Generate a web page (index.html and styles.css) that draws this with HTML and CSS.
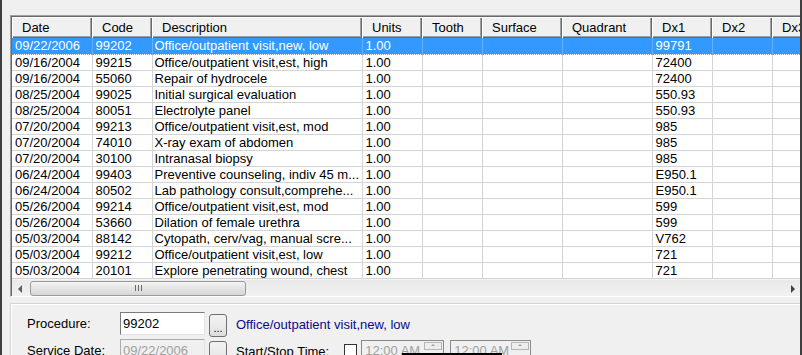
FILE: index.html
```html
<!DOCTYPE html>
<html lang="en">
<head>
<meta charset="UTF-8">
<title>Procedures</title>
<link rel="stylesheet" href="styles.css">
</head>
<body>
<div class="window">
  <div class="list">
    <div class="list-inner">
      <table class="grid">
        <colgroup>
          <col style="width:80px"><col style="width:60px"><col style="width:210px"><col style="width:60px"><col style="width:60px"><col style="width:80px"><col style="width:90px"><col style="width:60px"><col style="width:60px"><col style="width:60px">
        </colgroup>
        <thead>
          <tr><th>Date</th><th>Code</th><th>Description</th><th>Units</th><th>Tooth</th><th>Surface</th><th>Quadrant</th><th>Dx1</th><th>Dx2</th><th>Dx3</th></tr>
        </thead>
        <tbody id="rows"></tbody>
      </table>
      <div class="hscroll">
        <div class="arrow left"></div>
        <div class="track">
          <div class="thumb"><span class="grip"></span></div>
        </div>
        <div class="arrow right"></div>
      </div>
    </div>
  </div>

  <div class="details">
    <div class="field-row">
      <label class="field-label">Procedure:</label>
      <div class="textbox">99202</div>
      <button class="dots">...</button>
      <span class="desc-link">Office/outpatient visit,new, low</span>
    </div>
    <div class="field-row">
      <label class="field-label">Service Date:</label>
      <div class="textbox disabled">09/22/2006</div>
      <button class="dots">...</button>
      <span class="time-label">Start/Stop Time:</span>
      <span class="check"></span>
      <div class="timebox">12:00 AM<span class="spin"></span></div>
      <div class="timebox">12:00 AM<span class="spin"></span></div>
    </div>
  </div>
  <div class="drop-edge"></div>
</div>

<script>
  const rows = [
    ['09/22/2006', '99202', 'Office/outpatient visit,new, low', '99791'],
    ['09/16/2004', '99215', 'Office/outpatient visit,est, high', '72400'],
    ['09/16/2004', '55060', 'Repair of hydrocele', '72400'],
    ['08/25/2004', '99025', 'Initial surgical evaluation', '550.93'],
    ['08/25/2004', '80051', 'Electrolyte panel', '550.93'],
    ['07/20/2004', '99213', 'Office/outpatient visit,est, mod', '985'],
    ['07/20/2004', '74010', 'X-ray exam of abdomen', '985'],
    ['07/20/2004', '30100', 'Intranasal biopsy', '985'],
    ['06/24/2004', '99403', 'Preventive counseling, indiv 45 m...', 'E950.1'],
    ['06/24/2004', '80502', 'Lab pathology consult,comprehe...', 'E950.1'],
    ['05/26/2004', '99214', 'Office/outpatient visit,est, mod', '599'],
    ['05/26/2004', '53660', 'Dilation of female urethra', '599'],
    ['05/03/2004', '88142', 'Cytopath, cerv/vag, manual scre...', 'V762'],
    ['05/03/2004', '99212', 'Office/outpatient visit,est, low', '721'],
    ['05/03/2004', '20101', 'Explore penetrating wound, chest', '721']
  ];

  document.getElementById('rows').innerHTML = rows.map((r, i) =>
    `<tr${i === 0 ? ' class="selected"' : ''}><td>${r[0]}</td><td>${r[1]}</td><td>${r[2]}</td><td>1.00</td><td></td><td></td><td></td><td>${r[3]}</td><td></td><td></td></tr>`
  ).join('');
</script>
</body>
</html>
```

FILE: styles.css
```css
body {
  margin: 0;
  background: #f0f0f0;
  font-family: "Liberation Sans", Arial, sans-serif;
  font-size: 13px;
  color: #000;
  overflow: hidden;
}

.window {
  position: relative;
  width: 802px;
  height: 355px;
  box-sizing: border-box;
  border-left: 2px solid #3f3f3f;
  border-right: 2px solid #3f3f3f;
  padding: 15px 0 0 8px;
  overflow: hidden;
}

.list {
  width: 792px;
  height: 282px;
  border-top: 1px solid #a0a0a0;
  border-left: 1px solid #a0a0a0;
  border-bottom: 1px solid #fff;
  box-sizing: border-box;
  overflow: hidden;
}

.list-inner {
  height: 100%;
  border-top: 1px solid #696969;
  border-left: 1px solid #696969;
  background: #fff;
  overflow: hidden;
}

.grid {
  border-collapse: collapse;
  table-layout: fixed;
  width: 790px;
}

.grid th {
  height: 21px;
  padding: 0 0 1px 10px;
  box-sizing: border-box;
  text-align: left;
  font-weight: normal;
  background: #f0f0f0;
  box-shadow: inset 1px 1px 0 #fff, inset -1px -1px 0 #696969, inset -2px -2px 0 #a0a0a0;
  white-space: nowrap;
  overflow: hidden;
}

.grid td {
  height: 16px;
  padding: 0 1px 0 3px;
  box-sizing: border-box;
  line-height: 15px;
  border-right: 1px solid #d4d4d4;
  border-bottom: 1px solid #d4d4d4;
  white-space: nowrap;
  overflow: hidden;
}

.grid td:nth-child(3) { padding-left: 2px; }

.grid tr.selected td {
  background: #3399ff;
  color: #fff;
  border-right-color: #66b0ff;
  border-bottom: 1px dotted #e08a3a;
}

.hscroll {
  display: flex;
  height: 17px;
  background: linear-gradient(#e9e9e9, #f2f2f2);
  border-top: 1px solid #f4f4f4;
}

.arrow {
  width: 18px;
  position: relative;
}

.arrow::after {
  content: "";
  position: absolute;
  top: 5px;
  border-top: 4px solid transparent;
  border-bottom: 4px solid transparent;
}

.arrow.left::after { left: 6px; border-right: 4px solid #606060; }
.arrow.right::after { left: 7px; border-left: 4px solid #404040; }

.track {
  flex: 1;
  padding: 1px 0;
}

.thumb {
  width: 214px;
  height: 13px;
  border: 1px solid #9a9a9a;
  border-radius: 3px;
  background: linear-gradient(#f4f4f4, #e4e4e4 50%, #d6d6d6);
  display: flex;
  justify-content: center;
  align-items: center;
}

.grip {
  width: 7px;
  height: 6px;
  background: repeating-linear-gradient(90deg, #6a6a6a 0 1px, transparent 1px 3px);
}

.details {
  margin-top: 6px;
  border-top: 1px solid #d5d5d5;
  border-left: 1px solid #d5d5d5;
  box-shadow: inset 1px 1px 0 #fff;
  padding: 8px 0 0 16px;
  height: 60px;
}

.field-row {
  display: flex;
  align-items: flex-start;
  height: 23px;
  margin-bottom: 4px;
}

.field-label {
  width: 93px;
  line-height: 23px;
}

.textbox {
  width: 85px;
  height: 23px;
  box-sizing: border-box;
  border: 1px solid #7a7a7a;
  border-right-color: #e3e3e3;
  border-bottom-color: #e3e3e3;
  background: #fff;
  padding: 2px 0 0 2px;
  line-height: 17px;
}

.textbox.disabled {
  background: #f0f0f0;
  color: #a0a0a0;
  border-color: #adadad #e3e3e3 #e3e3e3 #adadad;
}

.dots {
  width: 18px;
  height: 23px;
  margin: 2px 0 0 4px;
  padding: 0;
  border: 1px solid #707070;
  border-radius: 3px;
  background: linear-gradient(#f2f2f2, #ebebeb 50%, #dddddd);
  font-family: "Liberation Sans", Arial, sans-serif;
  font-size: 11px;
  line-height: 26px;
  color: #000;
}

.desc-link {
  margin-left: 9px;
  line-height: 26px;
  color: #0a0a8c;
}

.time-label {
  margin-left: 9px;
  line-height: 26px;
}

.check {
  width: 11px;
  height: 11px;
  margin: 5px 0 0 15px;
  border: 1px solid #333;
  background: #fff;
}

.timebox {
  position: relative;
  width: 83px;
  height: 21px;
  box-sizing: border-box;
  margin: 1px 0 0 4px;
  border: 1px solid #8a8a8a;
  padding: 1px 0 0 3px;
  color: #a0a0a0;
  line-height: 17px;
}

.timebox + .timebox { margin-left: 6px; width: 81px; }

.spin {
  position: absolute;
  top: 1px;
  right: 1px;
  width: 18px;
  height: 8px;
  box-sizing: border-box;
  border: 1px solid #b5b5b5;
  background: #ededed;
}

.spin::after {
  content: "";
  position: absolute;
  left: 6px;
  top: 1px;
  border-left: 2px solid transparent;
  border-right: 2px solid transparent;
  border-bottom: 2px solid #a0a0a0;
}

.drop-edge {
  position: absolute;
  left: 400px;
  top: 353px;
  width: 100px;
  height: 2px;
  background: #000;
}
```
